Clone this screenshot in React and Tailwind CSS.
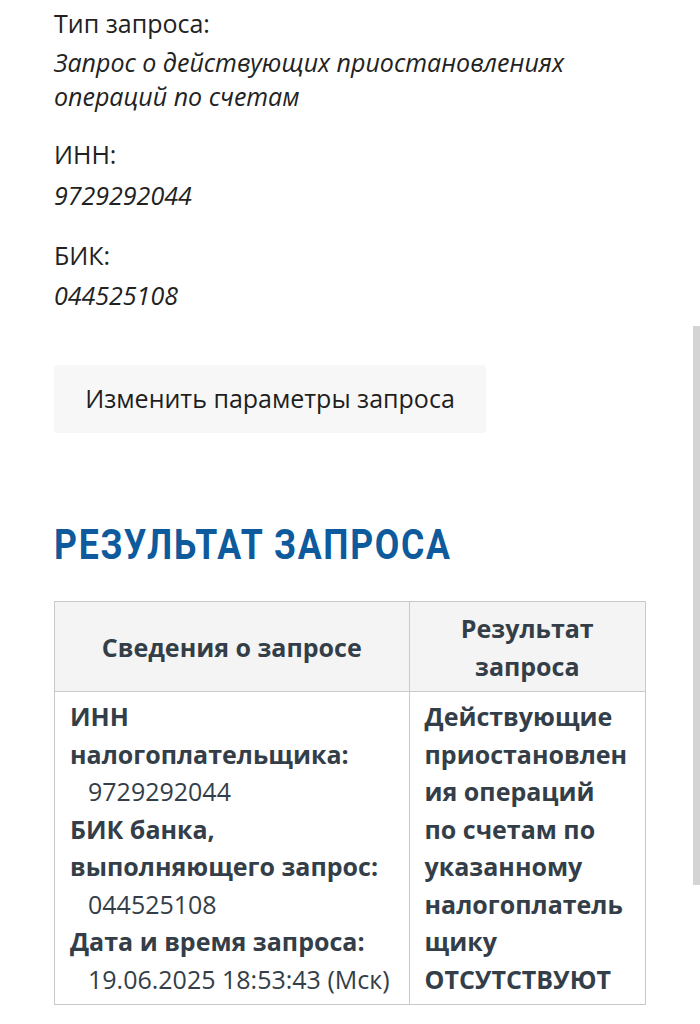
import React from "react";

export default function App() {
  const body = { fontFamily: '"Open Sans", "Liberation Sans", sans-serif' };
  return (
    <div className="relative w-[700px] h-[1024px] overflow-hidden bg-white" style={body}>
      <div className="pl-[54px] pr-[54px] pt-[6px] text-[#222222]">
        <div className="text-[25px] leading-[34px]">Тип запроса:</div>
        <div className="mt-[5px] text-[25px] leading-[34px] italic">
          Запрос о действующих приостановлениях
          <br />
          операций по счетам
        </div>
        <div className="mt-[24px] text-[25px] leading-[34px]">ИНН:</div>
        <div className="mt-[7px] text-[25px] leading-[34px] italic">9729292044</div>
        <div className="mt-[26px] text-[25px] leading-[34px]">БИК:</div>
        <div className="mt-[6px] text-[25px] leading-[34px] italic">044525108</div>

        <button className="mt-[53px] flex h-[68px] w-[432px] items-center justify-center rounded-[4px] bg-[#f7f7f7] text-[25px] text-[#1e1e1e]">
          Изменить параметры запроса
        </button>

        <h2
          className="mt-[87px] origin-left scale-x-[0.848] whitespace-nowrap text-[42px] font-bold leading-[50px] tracking-[2px] text-[#0d5a9c]"
          style={{ fontFamily: 'Roboto, "Liberation Sans", sans-serif' }}
        >
          РЕЗУЛЬТАТ ЗАПРОСА
        </h2>

        <table className="mt-[31px] w-[592px] border-collapse text-[#333e48]">
          <colgroup>
            <col className="w-[355px]" />
            <col className="w-[237px]" />
          </colgroup>
          <thead>
            <tr className="bg-[#f4f4f4]">
              <th className="h-[90px] border border-[#c9c9c9] px-4 text-center text-[25px] font-bold leading-[38px]">
                Сведения о запросе
              </th>
              <th className="h-[90px] border border-[#c9c9c9] px-2 text-center text-[25px] font-bold leading-[38px]">
                Результат
                <br />
                запроса
              </th>
            </tr>
          </thead>
          <tbody>
            <tr>
              <td className="whitespace-nowrap border border-[#c9c9c9] pl-[15px] pr-2 pt-[6px] pb-[6px] align-top text-[25px] leading-[37.5px]">
                <div className="font-bold">ИНН</div>
                <div className="font-bold">налогоплательщика:</div>
                <div className="pl-[18px]">9729292044</div>
                <div className="font-bold">БИК банка,</div>
                <div className="font-bold">выполняющего запрос:</div>
                <div className="pl-[18px]">044525108</div>
                <div className="font-bold">Дата и время запроса:</div>
                <div className="pl-[18px]">19.06.2025 18:53:43 (Мск)</div>
              </td>
              <td className="whitespace-nowrap border border-[#c9c9c9] pl-[15px] pr-1 pt-[6px] pb-[6px] align-top text-[25px] font-bold leading-[37.5px]">
                <div>Действующие</div>
                <div>приостановлен</div>
                <div>ия операций</div>
                <div>по счетам по</div>
                <div>указанному</div>
                <div>налогоплатель</div>
                <div>щику</div>
                <div>ОТСУТСТВУЮТ</div>
              </td>
            </tr>
          </tbody>
        </table>
      </div>
      <div className="absolute right-0 top-[326px] h-[559px] w-[7px] bg-[#d4d4d4]" />
    </div>
  );
}
